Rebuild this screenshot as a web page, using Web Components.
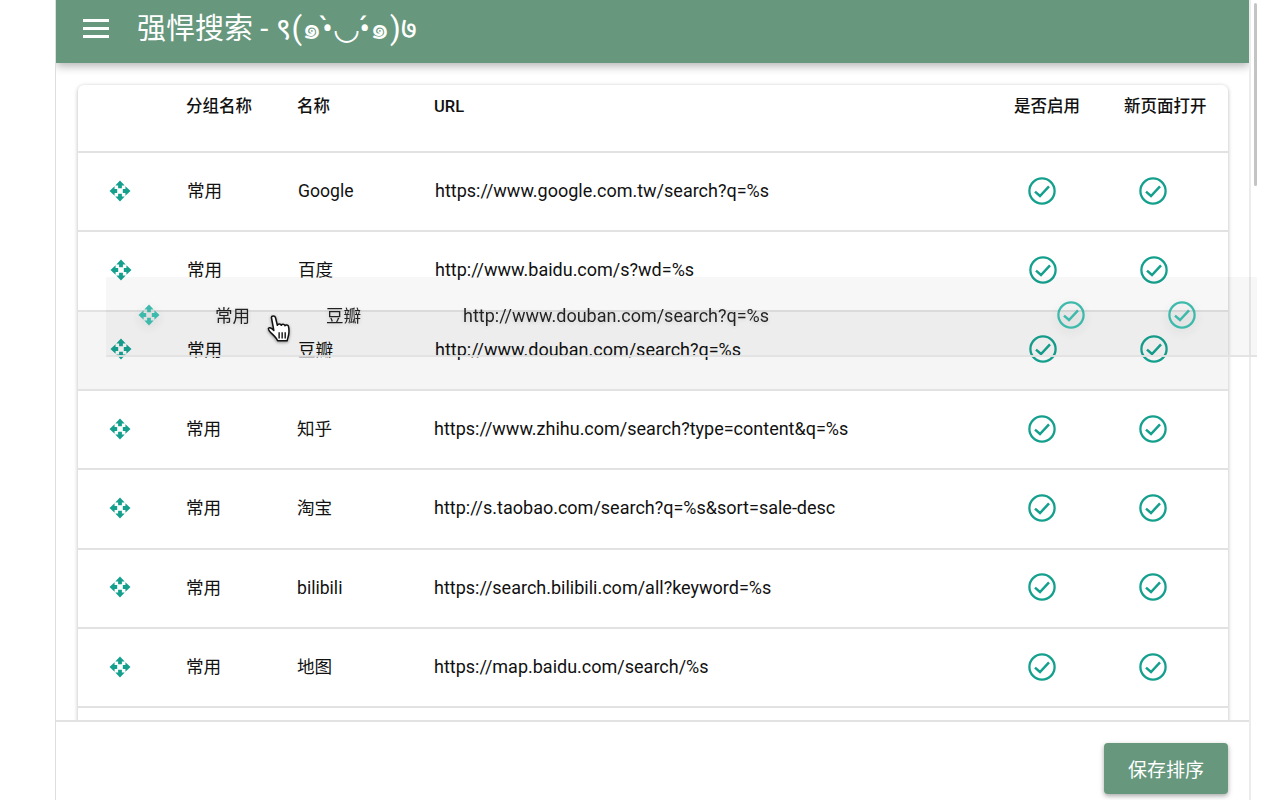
<!DOCTYPE html>
<html lang="zh"><head><meta charset="utf-8"><title>强悍搜索</title>
<style>
html,body{margin:0;height:100%;overflow:hidden;background:#fff}
body{font-family:Roboto,"Noto Sans CJK SC","Noto Sans",sans-serif;color:#111}
</style></head><body>
<sr-app>
  <sr-toolbar slot="bar">强悍搜索 - <span style="font-size:31px">९(๑•̀◡•́๑)७</span></sr-toolbar>
  <sr-card>
    <sr-head></sr-head>
    <sr-row group="常用" name="Google" url="https://www.google.com.tw/search?q=%s" style="--tx:1px"></sr-row>
    <sr-row group="常用" name="百度" url="http://www.baidu.com/s?wd=%s" style="--tx:1px;--ix:1px;--cx:1px"></sr-row>
    <sr-row group="常用" name="豆瓣" url="http://www.douban.com/search?q=%s" style="--tx:1px;--ix:1px;--cx:1px;background:#f5f5f5"></sr-row>
    <sr-row group="常用" name="知乎" url="https://www.zhihu.com/search?type=content&amp;q=%s"></sr-row>
    <sr-row group="常用" name="淘宝" url="http://s.taobao.com/search?q=%s&amp;sort=sale-desc"></sr-row>
    <sr-row group="常用" name="bilibili" url="https://search.bilibili.com/all?keyword=%s"></sr-row>
    <sr-row group="常用" name="地图" url="https://map.baidu.com/search/%s"></sr-row>
    <sr-row style="height:40px"></sr-row>
  </sr-card>
  <sr-button slot="foot">保存排序</sr-button>
</sr-app>
<sr-row class="ghost" ghost group="常用" name="豆瓣" url="http://www.douban.com/search?q=%s" style="--tx:1px;--ix:1px;--cx:1px"></sr-row>
<sr-cursor></sr-cursor>
<sr-scrollthumb></sr-scrollthumb>
<script>
const MOVE=`<svg viewBox="0 0 22 22" width="22" height="22" fill="currentColor" aria-hidden="true">
<path d="M11 .5 15.7 5.6H12.9V8.2H9.1V5.6H6.3Z"/><path d="M11 21.5 15.7 16.4H12.9V13.8H9.1V16.4H6.3Z"/>
<path d="M.5 11 5.6 6.3V9.1H8.2V12.9H5.6V15.7Z"/><path d="M21.5 11 16.4 6.3V9.1H13.8V12.9H16.4V15.7Z"/></svg>`;
const CHECK=`<svg viewBox="0 0 28 28" width="28" height="28" fill="none" stroke="currentColor" aria-hidden="true">
<circle cx="14" cy="14" r="12.6" stroke-width="2.3"/><path d="M7 14.6 12 19 21 9.4" stroke-width="2.5"/></svg>`;
function def(name,html,init){customElements.define(name,class extends HTMLElement{
  constructor(){super();this.attachShadow({mode:'open'}).innerHTML=html;}
  connectedCallback(){init&&init(this)}
});}
def('sr-app',`<style>
:host{display:flex;flex-direction:column;box-sizing:border-box;margin-left:55px;width:1196px;height:800px;border-left:1px solid #dedede;border-right:2px solid #ececec;overflow:hidden;position:relative}
.main{flex:1;min-height:0;overflow:hidden;padding:22px 22px 0 22px}
footer{height:80px;box-sizing:border-box;border-top:2px solid #e2e2e2;padding:21px 21px 0 0;display:flex;justify-content:flex-end;flex:none}
</style><slot name="bar"></slot><div class="main"><slot></slot></div><footer><slot name="foot"></slot></footer>`);
def('sr-toolbar',`<style>
:host{display:flex;flex:none;height:63px;box-sizing:border-box;background:#67987d;color:#fff;box-shadow:0 3px 9px rgba(0,0,0,.3);position:relative;z-index:2;padding:10px 0 0 27px;font-size:29px;line-height:38px;gap:28px;white-space:nowrap}
.m{width:26px;flex:none;padding-top:9px}
.m i{display:block;height:2.6px;background:#fff;margin-bottom:5.6px}
</style><div class="m"><i></i><i></i><i></i></div><span><slot></slot></span>`);
def('sr-card',`<style>:host{display:block;width:1150px;background:#fff;border-radius:6px 6px 0 0;box-shadow:0 1px 4px rgba(0,0,0,.28);}</style><slot></slot>`);
def('sr-head',`<style>
:host{display:grid;grid-template-columns:108px 111px 137px 552.5px 111px 111px;height:68px;box-sizing:border-box;border-bottom:2px solid #e2e2e2;font-size:16.5px;font-weight:500;line-height:22px;padding-top:11px;white-space:nowrap}
.a{padding-left:27.5px}.b{padding-left:26.5px}
</style><span></span><span>分组名称</span><span>名称</span><span>URL</span><span class="a">是否启用</span><span class="b">新页面打开</span>`);
def('sr-row',`<style>
:host{display:grid;grid-template-columns:108px 111px 137px 552.5px 111px 111px;align-items:center;height:79.33px;box-sizing:border-box;border-bottom:2px solid #e2e2e2;font-size:17.6px;color:#111}
:host(.ghost){position:absolute;left:106px;top:277px;width:1151px;height:80px;background:rgba(0,0,0,.035);z-index:3;opacity:.92}
:host(.ghost) svg{filter:drop-shadow(0 3px 6px rgba(0,0,0,.16))}
:host(.ghost) .i{color:#2eb5a5}
:host(.ghost) .t{text-shadow:0 1px 5px rgba(0,0,0,.18)}
.i{color:#15a08e;display:flex;padding-bottom:2px}
.mv{margin-left:calc(31px + var(--ix,0px))}
.ck{margin-left:calc(41.5px + var(--cx,0px))}
.t{padding-bottom:1px;white-space:nowrap;line-height:24px}
.u{font-size:18px}
.g,.n,.u{position:relative;left:var(--tx,0px)}
</style><span class="i mv"></span><span class="t g"></span><span class="t n"></span><span class="t u"></span><span class="i ck a"></span><span class="i ck b"></span>`,el=>{
  const r=el.shadowRoot;
  if(!el.hasAttribute('url'))return;
  r.querySelector('.mv').innerHTML=MOVE;r.querySelector('.a').innerHTML=CHECK;r.querySelector('.b').innerHTML=CHECK;
  r.querySelector('.g').textContent=el.getAttribute('group');
  r.querySelector('.n').textContent=el.getAttribute('name');
  r.querySelector('.u').textContent=el.getAttribute('url');
});
def('sr-button',`<style>
:host{display:flex;align-items:center;justify-content:center;width:124px;height:51px;background:#67987d;color:#fff;border-radius:4px;font-size:19px;box-shadow:0 2px 5px rgba(0,0,0,.35)}
</style><slot></slot>`);
def('sr-cursor',`<style>:host{position:absolute;left:267px;top:315px;width:24px;height:28px;z-index:4;display:block}</style>
<svg viewBox="1 1.5 19 22" width="24" height="28" aria-hidden="true" style="filter:drop-shadow(0 1px 1.5px rgba(0,0,0,.4))">
<path d="M4.5 3.4c0-1.6 2.8-1.7 3.2 0l1.5 6.2c.2-1.5 2.8-1.5 3.1 0 .2-1.2 2.7-1.2 3 .4.4-1 2.6-.8 2.8.8.2 1 .4 3.2.2 5.2-.2 2.4-1 4-1.4 5.8H9.4c-.9-2.2-2.6-3.8-5.2-6.2-1.2-1.2-2.6-2.6-2-3.6.7-1 2.4-.2 4.2 1.6Z" fill="#fff" stroke="#111" stroke-width="1.2" stroke-linejoin="round"/>
<path d="M10.6 15v5M13 15v5M15.4 15v5" stroke="#111" stroke-width="1.1"/></svg>`);
def('sr-scrollthumb',`<style>:host{position:absolute;left:1254px;top:3px;width:3px;height:183px;background:#c4c4c4;border-radius:2px;display:block;z-index:5}</style>`);
</script>
</body></html>
